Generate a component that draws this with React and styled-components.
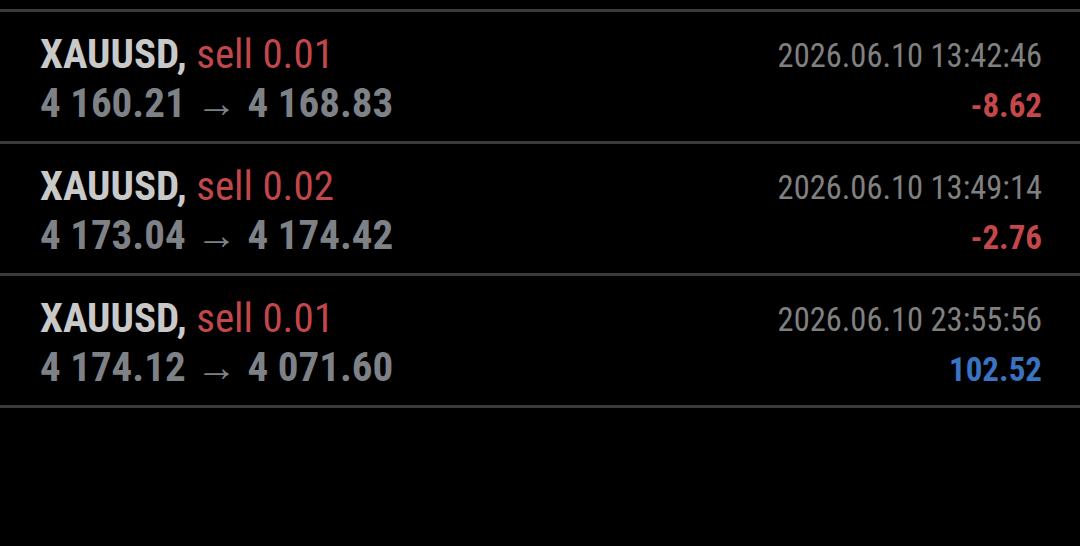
import React from "react";
import styled, { createGlobalStyle } from "styled-components";

const trades = [
  { symbol: "XAUUSD", side: "sell", volume: "0.01", open: "4 160.21", close: "4 168.83", time: "2026.06.10 13:42:46", profit: "-8.62" },
  { symbol: "XAUUSD", side: "sell", volume: "0.02", open: "4 173.04", close: "4 174.42", time: "2026.06.10 13:49:14", profit: "-2.76" },
  { symbol: "XAUUSD", side: "sell", volume: "0.01", open: "4 174.12", close: "4 071.60", time: "2026.06.10 23:55:56", profit: "102.52" },
];

export default function App() {
  return (
    <>
      <GlobalStyle />
      <Page>
        <List>
          {trades.map((t, i) => (
            <Row key={i}>
              <Left>
                <Title>
                  <Symbol>{t.symbol},</Symbol> <Side>{t.side} {t.volume}</Side>
                </Title>
                <Prices>
                  {t.open} <Arrow>→</Arrow> {t.close}
                </Prices>
              </Left>
              <Right>
                <Time>{t.time}</Time>
                <Profit negative={t.profit.startsWith("-")}>{t.profit}</Profit>
              </Right>
            </Row>
          ))}
        </List>
      </Page>
    </>
  );
}

const GlobalStyle = createGlobalStyle`
  html, body {
    margin: 0;
    background: #000;
  }
  body {
    font-family: Roboto, "Liberation Sans", sans-serif;
    font-stretch: 87.5%;
  }
`;

const Page = styled.div`
  width: 1080px;
  height: 546px;
  background: #000;
  padding-top: 9px;
  box-sizing: border-box;
`;

const List = styled.div`
  border-top: 3px solid #3a3a3f;
`;

const Row = styled.div`
  display: flex;
  justify-content: space-between;
  height: 129px;
  padding: 0 38px 0 40px;
  border-bottom: 3px solid #3a3a3f;
`;

const Left = styled.div`
  display: flex;
  flex-direction: column;
  padding-top: 17.5px;
`;

const Right = styled.div`
  display: flex;
  flex-direction: column;
  align-items: flex-end;
  padding-top: 24px;
`;

const Title = styled.div`
  font-size: 41px;
  line-height: 49px;
  white-space: pre;
`;

const Symbol = styled.span`
  color: #c9c9c9;
  font-weight: 700;
`;

const Side = styled.span`
  color: #c2474b;
`;

const Prices = styled.div`
  font-size: 41px;
  line-height: 49px;
  font-weight: 700;
  color: #7e8287;
  white-space: pre;
`;

const Arrow = styled.span`
  display: inline-block;
  margin: 0 1px;
`;

const Time = styled.div`
  font-size: 32.5px;
  line-height: 40px;
  color: #808080;
`;

const Profit = styled.div`
  font-size: 33px;
  line-height: 59px;
  font-weight: 700;
  color: ${({ negative }) => (negative ? "#c4474a" : "#3a73c1")};
`;
